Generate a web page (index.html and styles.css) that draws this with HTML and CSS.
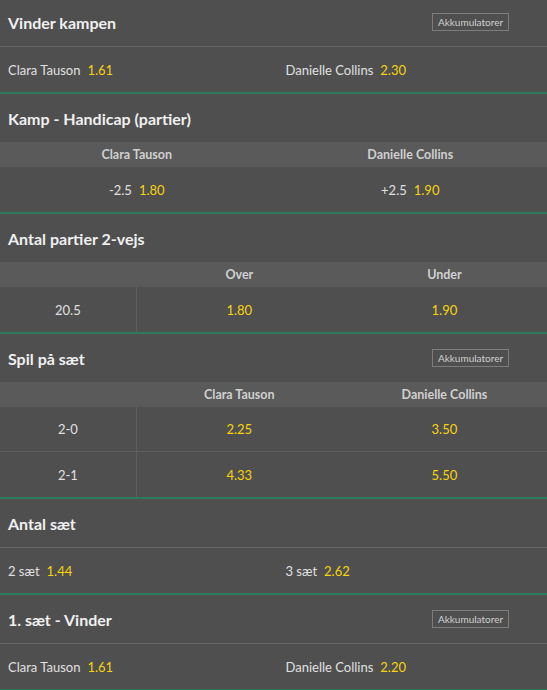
FILE: index.html
```html
<!DOCTYPE html>
<html lang="da">
<head>
<meta charset="utf-8">
<link rel="stylesheet" href="styles.css">
</head>
<body>
<div class="markets">
  <section class="market">
    <div class="title"><h2>Vinder kampen</h2><span class="acc">Akkumulatorer</span></div>
    <div class="split">
      <div class="pick"><span class="name">Clara Tauson</span><span class="odds">1.61</span></div>
      <div class="pick"><span class="name">Danielle Collins</span><span class="odds">2.30</span></div>
    </div>
  </section>

  <section class="market">
    <div class="title"><h2>Kamp - Handicap (partier)</h2></div>
    <div class="grid two head"><div>Clara Tauson</div><div>Danielle Collins</div></div>
    <div class="grid two row">
      <div><span class="name">-2.5</span><span class="odds">1.80</span></div>
      <div><span class="name">+2.5</span><span class="odds">1.90</span></div>
    </div>
  </section>

  <section class="market">
    <div class="title"><h2>Antal partier 2-vejs</h2></div>
    <div class="grid three head"><div></div><div>Over</div><div>Under</div></div>
    <div class="grid three row">
      <div class="label">20.5</div><div><span class="odds">1.80</span></div><div><span class="odds">1.90</span></div>
    </div>
  </section>

  <section class="market">
    <div class="title"><h2>Spil på sæt</h2><span class="acc">Akkumulatorer</span></div>
    <div class="grid three head"><div></div><div>Clara Tauson</div><div>Danielle Collins</div></div>
    <div class="grid three row sep">
      <div class="label">2-0</div><div><span class="odds">2.25</span></div><div><span class="odds">3.50</span></div>
    </div>
    <div class="grid three row">
      <div class="label">2-1</div><div><span class="odds">4.33</span></div><div><span class="odds">5.50</span></div>
    </div>
  </section>

  <section class="market">
    <div class="title"><h2>Antal sæt</h2></div>
    <div class="split">
      <div class="pick"><span class="name">2 sæt</span><span class="odds">1.44</span></div>
      <div class="pick"><span class="name">3 sæt</span><span class="odds">2.62</span></div>
    </div>
  </section>

  <section class="market">
    <div class="title"><h2>1. sæt - Vinder</h2><span class="acc">Akkumulatorer</span></div>
    <div class="split">
      <div class="pick"><span class="name">Clara Tauson</span><span class="odds">1.61</span></div>
      <div class="pick"><span class="name">Danielle Collins</span><span class="odds">2.20</span></div>
    </div>
  </section>
</div>
</body>
</html>
```

FILE: styles.css
```css
html, body {
  margin: 0;
  padding: 0;
  background: #4f4f4f;
  overflow: hidden;
}
body {
  font-family: Lato, "Liberation Sans", sans-serif;
  color: #e2e2e2;
  font-size: 13px;
}
.markets {
  margin-top: -2px;
}
.market {
  border-bottom: 2px solid #2e7a5c;
}
.title {
  height: 48px;
  display: flex;
  align-items: center;
  justify-content: space-between;
  padding: 0 38px 0 8px;
}
.title h2 {
  margin: 0;
  font-size: 16px;
  font-weight: 700;
  color: #f0f0f0;
}
.acc {
  display: inline-block;
  box-sizing: border-box;
  width: 77px;
  height: 18px;
  line-height: 16px;
  border: 1px solid #7d7d7d;
  font-size: 10px;
  color: #cfcfcf;
  text-align: center;
}
.split {
  display: grid;
  grid-template-columns: 1fr 1fr;
  border-top: 1px solid #666;
  height: 45px;
  align-items: center;
}
.pick {
  padding-left: 8px;
}
.pick + .pick {
  padding-left: 12px;
}
.name {
  color: #e0e0e0;
}
.odds {
  color: #f7d40c;
  margin-left: 7px;
}
.grid {
  display: grid;
  text-align: center;
  align-items: center;
}
.grid.two {
  grid-template-columns: 1fr 1fr;
}
.grid.three {
  grid-template-columns: 1fr 1.5fr 1.5fr;
}
.head {
  height: 25px;
  background: #5a5a5a;
  font-size: 12.5px;
  font-weight: 700;
  color: #d0d0d0;
}
.row {
  height: 45px;
}
.row > div {
  height: 100%;
  display: flex;
  align-items: center;
  justify-content: center;
}
.row .odds:first-child {
  margin-left: 0;
}
.grid.three.row > div:first-child {
  border-right: 1px solid #5f5f5f;
}
.row.sep {
  height: 44px;
  border-bottom: 1px solid #5f5f5f;
}
.label {
  color: #e0e0e0;
}
```
